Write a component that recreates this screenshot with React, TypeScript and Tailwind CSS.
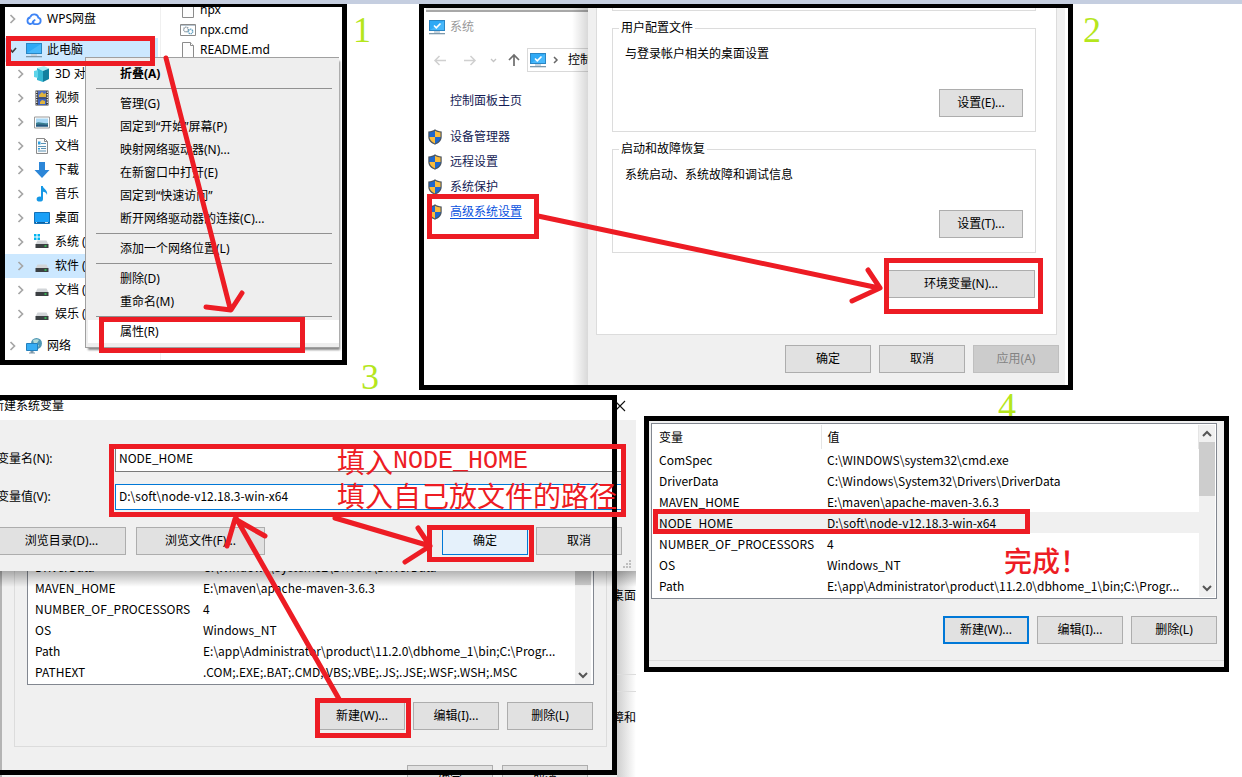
import type { ReactNode } from "react";

const RED = "#ed1c24";

type BtnProps = { children: ReactNode; className?: string; disabled?: boolean };

function Btn({ children, className = "w-[86px] border border-[#adadad] bg-[#e1e1e1]", disabled }: BtnProps) {
  return (
    <button
      type="button"
      disabled={disabled}
      className={`h-7 shrink-0 whitespace-nowrap text-center text-xs leading-4 disabled:text-[#838383] ${className}`}
    >
      {children}
    </button>
  );
}

function Chevron({ open = false }: { open?: boolean }) {
  return (
    <svg viewBox="0 0 8 10" className="h-[10px] w-2 shrink-0" fill="none" strokeWidth="1.7">
      {open ? <path d="M0 3l3.5 4L7 3" stroke="#404040" /> : <path d="M1.5 1l4 4-4 4" stroke="#a6a6a6" />}
    </svg>
  );
}

function Monitor({ check = false }: { check?: boolean }) {
  return (
    <svg viewBox="0 0 16 16" className="size-4 shrink-0">
      <rect x="0.5" y="1.5" width="15" height="10" fill="#2fa9f5" stroke="#2a86c4" />
      <path d="M1 11L15 2v9z" fill="#5cc4ff" opacity=".55" />
      <path d="M5 12h6v2H5z" fill="#c8d4de" />
      <path d="M0 14h16v1.3H0z" fill="#7c98ab" />
      {check && <path d="M5 6.5l2.3 2.3L11.5 4.5" fill="none" stroke="#fff" strokeWidth="1.6" />}
    </svg>
  );
}

function Shield() {
  return (
    <svg viewBox="0 0 14 16" className="h-4 w-[14px] shrink-0">
      <path d="M7 .3C5 1.7 3 2.300 .3 2.400V8c0 3.800 3 6.300 6.700 7.700C10.700 14.300 13.700 11.800 13.700 8V2.400C11 2.300 9 1.700 7 .3z" fill="#4b5560" />
      <path d="M7 1.700C5.200 2.800 3.500 3.300 1.500 3.400V8H7z" fill="#1d68cf" />
      <path d="M7 1.700c1.800 1.100 3.500 1.600 5.500 1.700V8H7z" fill="#fbbc3b" />
      <path d="M1.500 8c0 3 2.300 5 5.500 6.400V8z" fill="#fbbc3b" />
      <path d="M12.500 8c0 3-2.300 5-5.500 6.400V8z" fill="#1d68cf" />
    </svg>
  );
}

function Drive({ system = false }: { system?: boolean }) {
  return (
    <svg viewBox="0 0 16 16" className="size-4 shrink-0">
      {system && <path d="M0 0h2.500v2.500H0zM3.500 0H6v2.500H3.500zM0 3.500h2.500V6H0zM3.500 3.500H6V6H3.500z" fill="#00b4f0" />}
      <path d="M3.500 6.500h9l2 4h-13z" fill="#d2d5d8" />
      <rect x="1.500" y="10" width="13" height="4" fill="#3c4043" />
      <rect x="10.500" y="11.300" width="2" height="1.400" fill="#34e05a" />
    </svg>
  );
}

function Icon({ name }: { name: string }) {
  if (name === "pc") return <Monitor />;
  if (name === "drive") return <Drive />;
  if (name === "system") return <Drive system />;
  return (
    <svg viewBox="0 0 16 16" className="size-4 shrink-0">
      {name === "cloud" && (
        <g fill="none" stroke="#3e84f5" strokeWidth="1.800">
          <path d="M4.200 6.200a4.300 4.300 0 0 1 8.200.5 3.300 3.300 0 0 1-.6 6.400H8.500C6.500 13 6.300 11 7.500 10l1.800-1.400" />
          <path d="M4.500 6.500A3.300 3.300 0 0 0 4 13c2.500.2 3-1.500 4-2.500" />
        </g>
      )}
      {name === "cube" && (
        <g>
          <path d="M3 2l7-2 5 2.500L9 5z" fill="#a5edf5" />
          <path d="M3 2l6 3v11l-6-2z" fill="#35b7d3" />
          <path d="M15 2.500L9 5v11l6-3z" fill="#12809f" />
          <path d="M0 5l4-1v8l-4-1z" fill="#5fd5ea" />
        </g>
      )}
      {name === "film" && (
        <g>
          <path d="M1.500.5h13v15h-13z" fill="#3a3a3a" />
          <path d="M4 1h8v6.500H4z" fill="#4f6fc2" />
          <path d="M4 8.500h8V15H4z" fill="#3e62bd" />
          <path d="M5 5l3-3 2 2 2-1v4H5zM6 12l2-2 3 1v3H6z" fill="#e0b43c" />
          <path d="M2.700 1.500v13M13.300 1.500v13" stroke="#e8e8e8" strokeWidth="1.200" strokeDasharray="1.500 1" />
        </g>
      )}
      {name === "picture" && (
        <g>
          <path d="M.5 3h15v11H.5z" fill="#fff" stroke="#9a9a9a" />
          <path d="M2 4.500h12v8H2z" fill="#a8d8f5" />
          <path d="M2 9c3-2 7 1 12 0v3.500H2z" fill="#3b7f91" />
          <path d="M2 11c5-1 8 0 12 0v1.500H2z" fill="#27557d" />
        </g>
      )}
      {name === "doc" && (
        <g fill="none">
          <path d="M2.500.5h8l3 3v12h-11z" fill="#fafafa" stroke="#8a8a8a" />
          <path d="M10.500.5v3h3" stroke="#8a8a8a" />
          <path d="M7 5.500h5M4 8.500h8M7 10.500h5M4 13h8" stroke="#5d93b5" />
          <path d="M4 3.500h2.500v3H4zM4 10h2v1.500H4z" fill="#2c9fe0" />
        </g>
      )}
      {name === "down" && <path d="M5 0h6v8h4.500L8 16 .5 8H5z" fill="#2c86d8" />}
      {name === "music" && (
        <g fill="#1597e5">
          <path d="M7 0h1.800c.3 3 5.500 4 4.200 9-.5-2.500-2.500-3-4-3.200V13H7z" />
          <ellipse cx="5.800" cy="13" rx="3.200" ry="2.600" />
        </g>
      )}
      {name === "desktop" && (
        <g>
          <path d="M.5 2.500h15v11H.5z" fill="#1aa0f8" stroke="#1271b8" />
          <path d="M1 12h14v1H1z" fill="#0d5f9e" />
          <path d="M2 12.500h1M11 12.500h3" stroke="#fff" strokeWidth=".8" />
        </g>
      )}
      {name === "network" && (
        <g>
          <circle cx="10.500" cy="5.500" r="5.500" fill="#4f97b5" />
          <path d="M7 2c2-1 5-1 6 0l-2 3 2 3-3 2-2-4z" fill="#b4dbd8" />
          <path d="M.5 5.500h11v7H.5z" fill="#36adf4" stroke="#2380bd" />
          <path d="M4.500 13h3v1.500h-3zM3 14.500h6v1H3z" fill="#7e98a9" />
        </g>
      )}
      {name === "file" && (
        <g fill="#fdfdfd" stroke="#8b8b8b">
          <path d="M2.500.5h8l3 3v12h-11z" />
          <path d="M10.500.5v3h3" />
        </g>
      )}
      {name === "cmd" && (
        <g fill="none">
          <path d="M.5 2.500h15v11H.5z" fill="#fff" stroke="#8b8b8b" />
          <path d="M1 3.500h14" stroke="#b7c4cf" />
          <circle cx="6" cy="7.500" r="2.300" stroke="#8a98a2" strokeWidth="1.500" strokeDasharray="1.200 .6" />
          <circle cx="10.500" cy="9.500" r="2.200" stroke="#63a0c0" strokeWidth="1.500" strokeDasharray="1.200 .6" />
        </g>
      )}
    </svg>
  );
}

type TreeItem = { icon: string; label: string; selected?: boolean };

const devices: TreeItem[] = [
  { icon: "cube", label: "3D 对" },
  { icon: "film", label: "视频" },
  { icon: "picture", label: "图片" },
  { icon: "doc", label: "文档" },
  { icon: "down", label: "下载" },
  { icon: "music", label: "音乐" },
  { icon: "desktop", label: "桌面" },
  { icon: "system", label: "系统 (" },
  { icon: "drive", label: "软件 (", selected: true },
  { icon: "drive", label: "文档 (" },
  { icon: "drive", label: "娱乐 (" },
];

const menuGroups: string[][] = [
  ["折叠(A)"],
  ["管理(G)", "固定到“开始”屏幕(P)", "映射网络驱动器(N)...", "在新窗口中打开(E)", "固定到“快速访问”", "断开网络驱动器的连接(C)..."],
  ["添加一个网络位置(L)"],
  ["删除(D)", "重命名(M)"],
  ["属性(R)"],
];

function ExplorerPanel() {
  return (
    <section className="relative w-[347px] shrink-0">
      <div className="relative flex h-[361px] overflow-hidden border-[5px] border-t-[3px] border-black bg-white">
        <ul className="w-[156px] border-r border-[#f0f0f0]">
          <li className="mb-2 flex h-[23px] items-center gap-[5px] pl-1">
            <Chevron />
            <span className="pl-1"><Icon name="cloud" /></span>
            WPS网盘
          </li>
          <li>
            <div className="mr-[2px] flex h-6 items-center gap-[5px] bg-[#cce8ff] pl-1">
              <Chevron open />
              <span className="pl-1"><Icon name="pc" /></span>
              此电脑
            </div>
            <ul>
              {devices.map((d, i) => (
                <li
                  key={i}
                  className={`flex h-6 items-center gap-[5px] whitespace-nowrap pl-3 ${d.selected ? "bg-[#cce8ff]" : ""}`}
                >
                  <Chevron />
                  <span className="pl-1"><Icon name={d.icon} /></span>
                  {d.label}
                </li>
              ))}
            </ul>
          </li>
          <li className="mt-2 flex h-6 items-center gap-[5px] pl-1">
            <Chevron />
            <span className="pl-1"><Icon name="network" /></span>
            网络
          </li>
        </ul>
        <ul className="flex h-[53px] flex-col justify-end overflow-hidden pl-[19px]">
          {[["file", "npx"], ["cmd", "npx.cmd"], ["file", "README.md"]].map(([icon, label]) => (
            <li key={label} className="flex h-5 shrink-0 items-center gap-1">
              <Icon name={icon} />
              {label}
            </li>
          ))}
        </ul>
        <div className="absolute left-20 top-[50px] w-[254px] border border-r-0 border-[#a0a0a0] bg-[#eeeeee] pb-1 pl-[2px] pt-1 shadow-[2px_3px_2px_-1px_#888]">
          {menuGroups.map((group, g) => (
            <ul key={g}>
              {g > 0 && <li aria-hidden="true" className="mb-[3px] ml-2 mr-[7px] mt-[3px] h-px bg-[#919191]" />}
              {group.map((item) => (
                <li
                  key={item}
                  className={`flex h-[23px] items-center pl-8 ${g === 0 ? "font-bold" : ""} ${g === 4 ? "bg-white" : ""}`}
                >
                  {item}
                </li>
              ))}
            </ul>
          ))}
        </div>
      </div>
      <svg viewBox="0 4 347 361" className="absolute left-0 top-0 h-[361px] w-[347px]" fill="none" stroke={RED} strokeWidth="5">
        <rect x="8.500" y="38.500" width="144" height="25" />
        <rect x="101.500" y="319.500" width="201" height="31" />
        <path d="M166 58L230 308M206 307l25 3 11-17" strokeLinecap="round" strokeLinejoin="round" />
      </svg>
    </section>
  );
}

function SystemPanel() {
  return (
    <section className="relative w-[654px] shrink-0">
      <div className="flex h-[386px] overflow-hidden border-[5px] border-t-4 border-black bg-white pr-[3px]">
        <div className="relative w-[164px] shrink-0 overflow-hidden pl-[2px]">
          <div className="h-1 border-b-2 border-[#a8a8a8] bg-[#e4e4e4]" />
          <div className="mt-[6px] flex h-[18px] items-center gap-[5px] pl-[3px] text-[#999]">
            <Monitor check />
            系统
          </div>
          <div className="mt-3 flex h-6 items-center">
            <svg viewBox="0 0 101 16" className="h-4 w-[101px] shrink-0" fill="none">
              <path d="M20 8.500H9M13.500 4L9 8.500l4.500 4.500M38 8.500h11M44.500 4l4.500 4.500-4.500 4.500" stroke="#d0d0d0" strokeWidth="1.500" />
              <path d="M65 7l2.500 2.500L70 7" stroke="#c4c4c4" strokeWidth="1.300" />
              <path d="M88 14V3M83 8l5-5 5 5" stroke="#6d6d6d" strokeWidth="1.700" />
            </svg>
            <div className="flex h-6 flex-1 items-center whitespace-nowrap border border-r-0 border-[#d9d9d9] pl-[2px]">
              <Monitor check />
              <svg viewBox="0 0 22 10" className="h-[10px] w-[22px] shrink-0" fill="none">
                <path d="M8 2l3 3-3 3" stroke="#666" strokeWidth="1.500" />
              </svg>
              控制
            </div>
          </div>
          <nav className="mt-5 flex flex-col pl-[2px] text-[#151c55]">
            <a href="#home" className="mb-[14px] flex h-[18px] items-center pl-[22px]">控制面板主页</a>
            {["设备管理器", "远程设置", "系统保护"].map((t) => (
              <a key={t} href="#settings" className="flex h-[25px] items-center gap-2">
                <Shield />
                {t}
              </a>
            ))}
            <a href="#advanced" className="flex h-[25px] items-center gap-2 text-[#0a52e0] underline underline-offset-2">
              <Shield />
              高级系统设置
            </a>
          </nav>
          <div className="absolute inset-y-0 right-0 w-4 bg-gradient-to-r from-transparent to-black/15" />
        </div>
        <div className="flex-1 bg-[#f0f0f0] pl-2">
          <div className="mr-2 border border-t-0 border-[#dcdcdc] bg-white pb-9 pl-[15px] pr-5">
            <div className="h-[3px] border border-t-0 border-[#dcdcdc]" />
            {[
              ["用户配置文件", "与登录帐户相关的桌面设置", "设置(E)..."],
              ["启动和故障恢复", "系统启动、系统故障和调试信息", "设置(T)..."],
            ].map(([legend, text, button]) => (
              <fieldset key={legend} className="mt-2 border border-[#dcdcdc] pb-[14px] pl-3 pr-3">
                <legend className="-ml-[6px] px-[2px] leading-[18px]">{legend}</legend>
                <p className="mt-2 leading-[18px]">{text}</p>
                <div className="mt-[26px] flex justify-end">
                  <Btn className="w-[84px] border border-[#adadad] bg-[#e1e1e1]">{button}</Btn>
                </div>
              </fieldset>
            ))}
            <div className="mr-px mt-[17px] flex justify-end">
              <Btn className="w-[148px] border border-[#adadad] bg-[#e1e1e1]">环境变量(N)...</Btn>
            </div>
          </div>
          <div className="mt-[10px] flex justify-end gap-2 pr-[6px]">
            <Btn>确定</Btn>
            <Btn>取消</Btn>
            <Btn disabled className="w-[86px] border border-[#bfbfbf] bg-[#cccccc]">应用(A)</Btn>
          </div>
        </div>
      </div>
      <svg viewBox="419 4 654 386" className="absolute left-0 top-0 h-[386px] w-[654px]" fill="none" stroke={RED} strokeWidth="5">
        <rect x="429.500" y="196.500" width="107" height="40" />
        <rect x="886.500" y="260.500" width="154" height="51" />
        <path d="M538 216L879 288M868 270l12 18-28 13" strokeLinecap="round" strokeLinejoin="round" />
      </svg>
    </section>
  );
}

const lowerRows = [
  ["DriverData", "C:\\Windows\\System32\\Drivers\\DriverData"],
  ["MAVEN_HOME", "E:\\maven\\apache-maven-3.6.3"],
  ["NUMBER_OF_PROCESSORS", "4"],
  ["OS", "Windows_NT"],
  ["Path", "E:\\app\\Administrator\\product\\11.2.0\\dbhome_1\\bin;C:\\Progr..."],
  ["PATHEXT", ".COM;.EXE;.BAT;.CMD;.VBS;.VBE;.JS;.JSE;.WSF;.WSH;.MSC"],
];

const variableRows = [
  ["ComSpec", "C:\\WINDOWS\\system32\\cmd.exe"],
  ["DriverData", "C:\\Windows\\System32\\Drivers\\DriverData"],
  ["MAVEN_HOME", "E:\\maven\\apache-maven-3.6.3"],
  ["NODE_HOME", "D:\\soft\\node-v12.18.3-win-x64"],
  ["NUMBER_OF_PROCESSORS", "4"],
  ["OS", "Windows_NT"],
  ["Path", "E:\\app\\Administrator\\product\\11.2.0\\dbhome_1\\bin;C:\\Progr..."],
];

function ScrollArrow({ up = false }: { up?: boolean }) {
  return (
    <svg viewBox="0 0 16 17" className="h-[17px] w-4 shrink-0" fill="none" stroke="#555" strokeWidth="2">
      <path d={up ? "M4 11l4-4 4 4" : "M4 6l4 4 4-4"} />
    </svg>
  );
}

function NewVariablePanel() {
  return (
    <section className="relative w-[636px] shrink-0">
      <span className="absolute -top-8 left-[361px] font-['Liberation_Serif',serif] text-4xl leading-9 text-[#b5e61d]">3</span>
      <div className="overflow-hidden">
        <div className="relative -ml-2 bg-[#f0f0f0]">
          <div className="flex h-[29px] items-center justify-between bg-white pr-[10px]">
            <h2>新建系统变量</h2>
            <button type="button" aria-label="关闭">
              <svg viewBox="0 0 12 12" className="size-3" fill="none" stroke="#111" strokeWidth="1.100">
                <path d="M1 1l10 10M11 1L1 11" />
              </svg>
            </button>
          </div>
          <form className="pb-4 pl-[5px] pr-[14px] pt-[26px]" onSubmit={(e) => e.preventDefault()}>
            <div className="flex h-[26px] items-center">
              <label htmlFor="var-name" className="w-[118px]">变量名(N):</label>
              <input id="var-name" defaultValue="NODE_HOME" className="h-[26px] flex-1 border border-[#7a7a7a] bg-white pb-1 pl-[3px] font-['Noto_Sans_CJK_SC',sans-serif] outline-none" />
            </div>
            <div className="mt-3 flex h-[26px] items-center">
              <label htmlFor="var-value" className="w-[118px]">变量值(V):</label>
              <input id="var-value" defaultValue="D:\soft\node-v12.18.3-win-x64" className="h-[26px] flex-1 border border-[#0078d7] bg-white pb-1 pl-[3px] font-['Noto_Sans_CJK_SC',sans-serif] outline-none" />
            </div>
            <div className="mt-[17px] flex gap-[10px]">
              <Btn className="w-[129px] border border-[#adadad] bg-[#e1e1e1]">浏览目录(D)...</Btn>
              <Btn className="w-[129px] border border-[#adadad] bg-[#e1e1e1]">浏览文件(F)...</Btn>
              <div className="ml-auto flex gap-2">
                <Btn className="w-[86px] border border-[#0078d7] bg-[#e5f1fb]">确定</Btn>
                <Btn>取消</Btn>
              </div>
            </div>
          </form>
          <svg viewBox="0 0 9 9" className="absolute bottom-[2px] right-1 size-[9px]" fill="#bfbfbf">
            <path d="M6 0h2v2H6zM3 3h2v2H3zM6 3h2v2H6zM0 6h2v2H0zM3 6h2v2H3zM6 6h2v2H6z" />
          </svg>
        </div>
        <div className="relative flex h-[206px] overflow-hidden">
          <div className="w-[617px] border-l-2 border-[#b4b4b4] bg-[#f0f0f0] pl-3">
            <div className="h-[176px] w-[593px] border border-t-0 border-[#dcdcdc] pl-3">
              <div className="flex h-[114px] w-[567px] border border-t-0 border-[#828790] bg-white">
                <div className="flex flex-1 flex-col justify-end overflow-hidden pb-[2px]">
                  <table className="w-full shrink-0 table-fixed font-['Noto_Sans_CJK_SC',sans-serif]">
                    <tbody>
                      {lowerRows.map(([k, v]) => (
                        <tr key={k} className="h-[21px] whitespace-nowrap leading-5">
                          <td className="w-[168px] p-0 pl-[7px]">{k}</td>
                          <td className="p-0 pl-[7px]">{v}</td>
                        </tr>
                      ))}
                    </tbody>
                  </table>
                </div>
                <div className="mr-[2px] flex w-4 flex-col justify-between bg-[#f0f0f0]">
                  <div className="h-[14px] bg-[#cdcdcd]" />
                  <ScrollArrow />
                </div>
              </div>
              <div className="mr-[13px] mt-[17px] flex justify-end gap-2">
                <Btn>新建(W)...</Btn>
                <Btn>编辑(I)...</Btn>
                <Btn>删除(L)</Btn>
              </div>
            </div>
            <div className="mt-[18px] flex w-[574px] justify-end gap-[9px]">
              <Btn>确定</Btn>
              <Btn>取消</Btn>
            </div>
          </div>
          <div className="flex-1 overflow-hidden whitespace-nowrap bg-gradient-to-r from-[#cfcfcf] to-white">
            <p className="mt-4 flex justify-end leading-[18px]">桌面</p>
            <div className="mt-[69px] h-[18px] border-y border-[#dcdcdc]" />
            <p className="mt-[17px] flex justify-end leading-[18px]">障和</p>
          </div>
          <div className="absolute inset-x-0 top-0 h-4 bg-gradient-to-b from-black/30 to-transparent" />
        </div>
      </div>
      <div className="absolute left-0 top-1 h-[380px] w-[617px] border-y-[5px] border-r-[5px] border-black" />
      <svg viewBox="0 391 636 386" className="absolute left-0 top-0 h-[386px] w-[636px]" fill="none" stroke={RED} strokeWidth="5">
        <rect x="111.500" y="446.500" width="512" height="68" />
        <rect x="429.500" y="527.500" width="102" height="32" />
        <rect x="317.500" y="700.500" width="91" height="35" />
        <g strokeLinecap="round" strokeLinejoin="round">
          <path d="M335 518L430 546M418 528l12 18-25 16" />
          <path d="M339 699L236 518M227 546l8-27 30 17" />
        </g>
      </svg>
      <div className="absolute left-[337px] top-[54px] whitespace-nowrap text-[28px] text-[#ed1c24]">
        <p className="flex h-[34px] items-center leading-[34px]">
          填入<span className="font-['Liberation_Mono',monospace] text-[25px]">NODE_HOME</span>
        </p>
        <p className="h-[34px] leading-[34px]">填入自己放文件的路径</p>
      </div>
    </section>
  );
}

function VariablesPanel() {
  return (
    <section className="relative ml-2 mr-[13px] mt-[25px] flex-1">
      <span className="absolute -top-7 left-[354px] font-['Liberation_Serif',serif] text-4xl leading-9 text-[#b5e61d]">4</span>
      <div className="relative h-[256px] border-[5px] border-black bg-[#f0f0f0] pl-[2px] pr-[7px] pt-[2px]">
        <div className="flex h-[176px] border border-[#828790] bg-white p-px">
          <table className="h-[171px] w-full flex-1 table-fixed font-['Noto_Sans_CJK_SC',sans-serif]">
            <thead>
              <tr className="h-6 text-left">
                <th className="w-[168px] border-r border-[#e5e5e5] p-0 pl-[6px] font-normal">变量</th>
                <th className="border-r border-[#e5e5e5] p-0 pl-[6px] font-normal">值</th>
              </tr>
            </thead>
            <tbody>
              {variableRows.map(([k, v]) => (
                <tr key={k} className={`h-[21px] whitespace-nowrap leading-5 ${k === "NODE_HOME" ? "bg-[#f0f0f0]" : ""}`}>
                  <td className="p-0 pl-[6px]">{k}</td>
                  <td className="p-0 pl-[6px]">{v}</td>
                </tr>
              ))}
            </tbody>
          </table>
          <div className="flex w-4 flex-col bg-[#f0f0f0]">
            <ScrollArrow up />
            <div className="h-[54px] bg-[#cdcdcd]" />
            <div className="mt-auto"><ScrollArrow /></div>
          </div>
        </div>
        <div className="mt-[17px] flex justify-end gap-2">
          <Btn className="w-[86px] border-2 border-[#0078d7] bg-[#e1e1e1]">新建(W)...</Btn>
          <Btn>编辑(I)...</Btn>
          <Btn>删除(L)</Btn>
        </div>
        <div className="-ml-[2px] -mr-[7px] mt-4 h-px bg-[#dcdcdc]" />
      </div>
      <svg viewBox="644 416 585 256" className="absolute left-0 top-0 h-[256px] w-[585px]" fill="none" stroke={RED} strokeWidth="5">
        <rect x="655.500" y="511.500" width="372" height="20" />
      </svg>
      <p className="absolute left-[360px] top-[126px] font-['Noto_Sans_CJK_SC',sans-serif] text-[28px] font-medium leading-9 text-[#ed1c24]">完成！</p>
    </section>
  );
}

export default function App() {
  return (
    <main className="min-h-screen overflow-hidden bg-white font-['Noto_Sans','Noto_Sans_CJK_SC',sans-serif] text-xs leading-4 text-black">
      <div className="h-1 bg-[#c5cee0]" />
      <div className="flex">
        <ExplorerPanel />
        <span className="w-[72px] shrink-0 pl-[6px] pt-2 font-['Liberation_Serif',serif] text-4xl leading-9 text-[#b5e61d]">1</span>
        <SystemPanel />
        <span className="pl-[10px] pt-2 font-['Liberation_Serif',serif] text-4xl leading-9 text-[#b5e61d]">2</span>
      </div>
      <div className="mt-px flex items-start">
        <NewVariablePanel />
        <VariablesPanel />
      </div>
    </main>
  );
}
